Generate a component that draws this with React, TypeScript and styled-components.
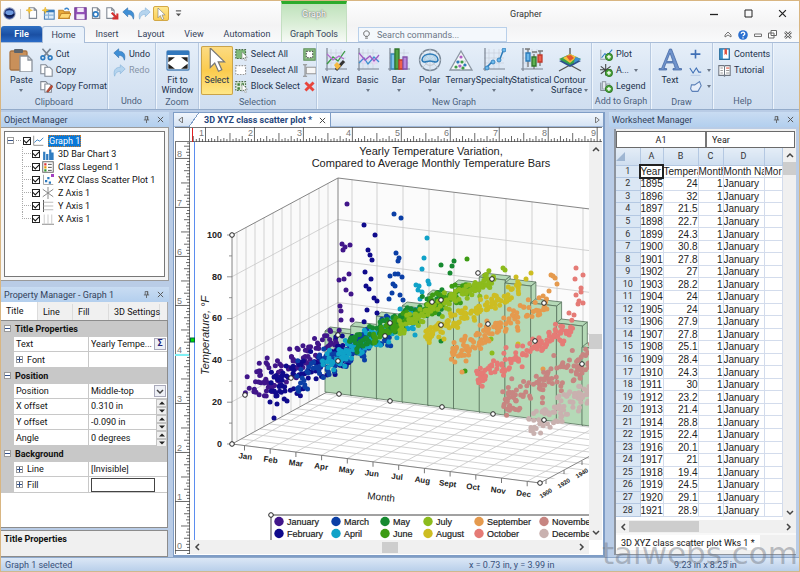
import React from "react";
import styled, { createGlobalStyle, css } from "styled-components";

const ui = `Roboto, "Noto Sans", sans-serif`;
const sheet = `"Liberation Sans", Arial, sans-serif`;

const Global = createGlobalStyle`
  * { box-sizing: border-box; }
  body { margin: 0; font-family: ${ui}; font-size: 9px; color: #1f2d42; background: #b9cce6; }
  button, input, select { font: inherit; color: inherit; margin: 0; padding: 0; border: 0; background: none; border-radius: 0; }
  svg { display: block; flex: none; }
`;

/* ---------- frame ---------- */
const Window = styled.div`
  height: 100vh;
  min-height: 560px;
  display: flex;
  flex-direction: column;
  border: 1px solid #d9b682;
  border-bottom: 0;
  overflow: hidden;
  position: relative;
`;
const Header = styled.header`
  display: flex;
  height: 42px;
  flex: none;
  background: linear-gradient(#fefefe, #f3f3f4 60%, #f9fafb);
  border-bottom: 1px solid #a9bdd8;
`;
const HeadLeft = styled.div`
  width: 280px;
  display: flex;
  flex-direction: column;
`;
const HeadRight = styled.div`
  flex: 1;
  display: flex;
  flex-direction: column;
`;
const QuickBar = styled.div`
  height: 26px;
  display: flex;
  align-items: center;
  gap: 2px;
  padding-left: 1px;
`;
const QuickButton = styled.button<{ $on?: boolean }>`
  width: ${(p) => (p.$on ? 16 : 14)}px;
  height: 15px;
  display: grid;
  place-items: center;
  border-radius: 2px;
  ${(p) => p.$on && css`background: linear-gradient(#ffe88f, #fbce55); border: 1px solid #d3a845;`}
`;
const QuickSep = styled.i`
  width: 1px;
  height: 10px;
  margin: 0 2px;
  background: #c9c9c9;
`;
const TabRow = styled.nav`
  height: 16px;
  display: flex;
  align-items: stretch;
`;
const RibbonTab = styled.button<{ $w: number; $kind?: "file" | "active" }>`
  width: ${(p) => p.$w}px;
  height: ${(p) => (p.$kind === "active" ? 17 : 16)}px;
  color: #34425a;
  border-radius: 3px 3px 0 0;
  ${(p) => p.$kind === "file" && css`background: linear-gradient(#2f6fc2, #1a4fa3 55%, #2a6cc8); color: #fff; font-weight: 600;`}
  ${(p) => p.$kind === "active" && css`background: #e9f1fa; border: 1px solid #a9bdd8; border-bottom: 0;`}
`;
const ContextTab = styled.div`
  width: 66px;
  border-top: 3px solid #2cab2c;
  background: linear-gradient(#bfe2bb, #dcefd9 55%, #f7faf7);
  border-left: 1px solid #c4dfc2;
  border-right: 1px solid #c4dfc2;
  display: flex;
  flex-direction: column;
  align-items: center;
  span { height: 22px; line-height: 20px; color: #fff; text-shadow: 0 0 2px #666, 0 0 1px #666; }
  button { height: 16px; color: #34425a; }
`;
const TitleRow = styled.div`
  height: 26px;
  display: flex;
  align-items: center;
  padding-left: 163px;
  h1 { flex: 1; margin: 0; font-size: 9px; font-weight: 400; color: #333; }
`;
const WindowButton = styled.button`
  width: 34px;
  height: 22px;
  display: grid;
  place-items: center;
`;
const SearchRow = styled.div`
  height: 16px;
  display: flex;
  align-items: center;
  padding: 1px 4px 0 11px;
`;
const SearchBox = styled.label`
  width: 149px;
  height: 15px;
  display: flex;
  align-items: center;
  gap: 6px;
  padding-left: 3px;
  border: 1px solid #b9d0ea;
  background: #f4f8fc;
  input { flex: 1; min-width: 0; outline: 0; }
  input::placeholder { color: #6b7686; opacity: 1; }
`;
const CaptionTools = styled.div`
  margin-left: auto;
  display: flex;
  align-items: center;
  button { width: 15px; display: grid; place-items: center; }
`;

/* ---------- ribbon ---------- */
const Ribbon = styled.div`
  height: 67px;
  flex: none;
  display: flex;
  background: linear-gradient(#e6eff9, #dae6f4 45%, #cfdef0);
  border-bottom: 1px solid #93abca;
`;
const Group = styled.section<{ $w: number }>`
  width: ${(p) => p.$w}px;
  display: flex;
  flex-direction: column;
  border-right: 1px solid #b7c9e0;
  box-shadow: 1px 0 0 #eef5fc;
  h2 { margin: 0; height: 15px; line-height: 14px; font-size: 9px; font-weight: 400; text-align: center; color: #4c5f7c; white-space: nowrap; }
`;
const GroupBody = styled.div`
  flex: 1;
  display: flex;
  padding: 3px 0 0 2px;
`;
const Stack = styled.div<{ $pad?: number }>`
  display: flex;
  flex-direction: column;
  padding-left: ${(p) => p.$pad ?? 0}px;
`;
const SmallButton = styled.button<{ $dim?: boolean }>`
  height: 16px;
  display: flex;
  align-items: center;
  gap: 3px;
  white-space: nowrap;
  color: ${(p) => (p.$dim ? "#8794a8" : "#22324c")};
`;
const BigButton = styled.button<{ $w: number; $on?: boolean }>`
  width: ${(p) => p.$w}px;
  height: 49px;
  display: flex;
  flex-direction: column;
  align-items: center;
  padding-top: 2px;
  line-height: 10px;
  white-space: nowrap;
  border-radius: 2px;
  color: #22324c;
  svg { margin-bottom: 3px; }
  ${(p) => p.$on && css`
    background: linear-gradient(#fcdc85, #fbcb4e 50%, #ffe88a);
    box-shadow: inset 0 0 0 1px #c9a34a;
  `}
`;
const Caret = styled.i`
  display: block;
  border: 2px solid transparent;
  border-top: 3px solid #6b7686;
  border-bottom: 0;
  margin-top: 4px;
`;
const InlineCaret = styled(Caret)`
  margin: 0 0 0 2px;
`;
const CaretLine = styled.span`
  display: flex;
  align-items: center;
`;

/* ---------- body ---------- */
const Body = styled.main`
  flex: 1;
  min-height: 0;
  display: flex;
  gap: 4px;
  padding-top: 2px;
`;
const LeftColumn = styled.div`
  width: 168px;
  display: flex;
  flex-direction: column;
  gap: 6px;
`;
const Panel = styled.section<{ $grow?: boolean }>`
  display: flex;
  flex-direction: column;
  ${(p) => p.$grow && css`flex: 1; min-height: 0;`}
`;
const PanelHead = styled.header`
  height: 15px;
  flex: none;
  display: flex;
  align-items: center;
  padding: 0 5px 0 3px;
  gap: 7px;
  background: linear-gradient(#c9dcf2, #b3cfee);
  color: #33415a;
  h3 { flex: 1; margin: 0; font-size: 9px; font-weight: 400; }
`;
const TreeFrame = styled.div`
  height: 154px;
  padding: 3px;
  background: #f6f6f6;
  border: 1px solid #9a9a9a;
  border-left: 0;
`;
const Tree = styled.ul`
  margin: 0;
  height: 100%;
  list-style: none;
  padding: 2px 0 51px 2px;
  background: #fff;
  border: 1px solid #777;
  display: grid;
  grid-template-rows: repeat(7, 1fr);
`;
const TreeRow = styled.li<{ $child?: boolean }>`
  display: flex;
  align-items: center;
  gap: 2px;
  color: #111;
  min-height: 0;
  padding-left: ${(p) => (p.$child ? 15 : 0)}px;
  label { white-space: nowrap; line-height: 12px; padding: 0 1px 0 2px; }
`;
const Dash = styled.i`
  width: 5px;
  border-top: 1px dotted #999;
`;
const ChildBranch = styled.i<{ $last?: boolean }>`
  width: 10px;
  align-self: stretch;
  margin-right: -2px;
  background:
    repeating-linear-gradient(#aaa 0 1px, transparent 1px 2px) 0 0 / 1px ${(p) => (p.$last ? "50%" : "100%")} no-repeat,
    repeating-linear-gradient(90deg, #aaa 0 1px, transparent 1px 2px) 0 50% / 100% 1px no-repeat;
`;
const Check = styled.input`
  appearance: none;
  width: 8px;
  height: 8px;
  flex: none;
  margin: 0;
  border: 1px solid #222;
  background: #fff;
  display: grid;
  place-items: center;
  &:checked::after {
    content: "";
    width: 5px;
    height: 3px;
    margin-top: -2px;
    border: solid #111;
    border-width: 0 0 1px 1px;
    transform: rotate(-45deg);
  }
`;
const Expander = styled.button`
  width: 7px;
  height: 7px;
  flex: none;
  display: grid;
  place-items: center;
  border: 1px solid #9a9a9a;
  background: #fff;
`;
const Selected = styled.b`
  font-weight: 400;
  display: inline-block;
  background: #0a78d7;
  color: #fff;
  outline: 1px dotted #c77a30;
  outline-offset: -1px;
  padding: 0 1px;
`;

const PropTabs = styled.div`
  height: 18px;
  flex: none;
  display: flex;
  align-items: flex-end;
  background: #f0f0f0;
  margin-right: 1px;
  border-right: 1px solid #aaa;
`;
const PropTab = styled.button<{ $w: number; $on?: boolean }>`
  width: ${(p) => p.$w}px;
  height: ${(p) => (p.$on ? 18 : 16)}px;
  text-align: left;
  padding-left: 5px;
  color: #111;
  background: ${(p) => (p.$on ? "#fff" : "#f0f0f0")};
  border-right: 1px solid #dcdcdc;
  white-space: nowrap;
`;
const PropBox = styled.div`
  flex: 1;
  min-height: 0;
  background: #fff;
  border: solid #8c8c8c;
  border-width: 1px 1px 1px 0;
  margin-right: 1px;
  color: #111;
`;
const PropGrid = styled.div`
  height: 172px;
  display: grid;
  grid-template-rows: repeat(11, 1fr);
`;
const PropGroup = styled.div`
  display: flex;
  align-items: center;
  gap: 4px;
  padding-left: 3px;
  background: #c8c8c8;
  font-weight: 700;
`;
const PropRow = styled.div`
  display: grid;
  grid-template-columns: 13px 75px 1fr;
  min-height: 0;
  &::before { content: ""; background: #c8c8c8; }
`;
const PropName = styled.label`
  display: flex;
  align-items: center;
  gap: 4px;
  padding-left: 2px;
  border: solid #c8c8c8;
  border-width: 0 1px 1px 0;
`;
const PropValue = styled.div`
  display: flex;
  align-items: center;
  padding-left: 2px;
  border-bottom: 1px solid #c8c8c8;
  min-width: 0;
  input, select { flex: 1; min-width: 0; width: 0; height: 100%; outline: 0; appearance: none; text-overflow: ellipsis; }
`;
const TinyButton = styled.button`
  width: 12px;
  height: 12px;
  display: grid;
  place-items: center;
  border: 1px solid #aab;
  background: #eef0f6;
  font-weight: 700;
  color: #22227a;
  line-height: 9px;
  margin-right: 1px;
`;
const Spinner = styled.div`
  width: 11px;
  height: 14px;
  display: grid;
  grid-template-rows: 1fr 1fr;
  button { background: #efefef; border: 1px solid #c4c4c4; display: grid; place-items: center; }
`;
const Swatch = styled.button`
  width: 64px;
  height: 14px;
  border: 1px solid #444;
  background: #fff;
`;
const HelpBox = styled.div`
  height: 27px;
  flex: none;
  margin: 2px 1px 0 0;
  padding: 3px;
  background: #f0f0f0;
  border: 1px solid #8c8c8c;
  border-left: 0;
  font-weight: 700;
  color: #111;
`;

/* ---------- document ---------- */
const Doc = styled.section`
  flex: 1;
  min-width: 0;
  display: flex;
  flex-direction: column;
  border: solid #7f9dc6;
  border-width: 1px 2px 2px 1px;
  background: #fff;
  padding: 0 1px 1px;
`;
const DocTabs = styled.div`
  height: 14px;
  flex: none;
  margin: 0 -1px;
  display: flex;
  align-items: stretch;
  background: linear-gradient(#f1f6fc, #d6e4f5);
  border-bottom: 1px solid #9db6d8;
`;
const ArrowButton = styled.button`
  width: 13px;
  display: grid;
  place-items: center;
`;
const DocTab = styled.div`
  height: 14px;
  display: flex;
  align-items: center;
  gap: 7px;
  padding: 0 4px 0 17px;
  background: linear-gradient(125deg, transparent 9px, #7f9dc6 9px 10px, #fff 10px);
  border-right: 1px solid #7f9dc6;
  color: #26467c;
  font-weight: 700;
  white-space: nowrap;
  margin-right: auto;
  button { display: grid; place-items: center; }
`;
const DocGrid = styled.div`
  flex: 1;
  min-height: 0;
  display: grid;
  grid-template-columns: 15px 1fr 13px;
  grid-template-rows: 15px 1fr 14px;
`;
const TopRuler = styled.div`
  grid-column: 1 / 4;
  overflow: hidden;
`;
const SideRuler = styled.div`
  grid-row: 2 / 4;
  overflow: hidden;
`;
const Canvas = styled.div`
  overflow: hidden;
  min-width: 0;
  min-height: 0;
`;
const VScroll = styled.div<{ $thumb: number; $top: number }>`
  display: flex;
  flex-direction: column;
  align-items: center;
  justify-content: space-between;
  padding: 4px 0;
  background:
    linear-gradient(#cdcdcd, #cdcdcd) 50% ${(p) => p.$top}% / 100% ${(p) => p.$thumb}px no-repeat,
    #f0f0f0;
`;
const HScroll = styled.div<{ $thumb: number; $left: number }>`
  min-height: 13px;
  flex: none;
  display: flex;
  align-items: center;
  justify-content: space-between;
  padding: 0 4px;
  background:
    linear-gradient(#cdcdcd, #cdcdcd) ${(p) => p.$left}% 50% / ${(p) => p.$thumb}px 11px no-repeat,
    #f0f0f0;
`;

/* ---------- worksheet ---------- */
const RightColumn = styled.div`
  width: 190px;
  display: flex;
  flex-direction: column;
`;
const SheetFrame = styled.div`
  flex: 1;
  min-height: 0;
  display: flex;
  flex-direction: column;
  background: #f0f0f0;
  border-left: 2px solid #8d949e;
  border-bottom: 1px solid #8d949e;
  margin: 2px 3px 2px 5px;
  padding: 2px 0 0;
`;
const FormulaBar = styled.div`
  display: flex;
  height: 17px;
  flex: none;
  border: 1px solid #6a6a6a;
  background: #fff;
  margin-right: 1px;
  color: #222;
  input { min-width: 0; outline: 0; }
  input:first-child { width: 90px; text-align: center; border-right: 2px solid #777; }
  input:last-child { flex: 1; padding-left: 5px; }
`;
const SheetArea = styled.div`
  flex: 1;
  min-height: 0;
  display: grid;
  grid-template-columns: 1fr 13px;
`;
const TableWrap = styled.div`
  display: grid;
  min-width: 0;
  overflow: hidden;
  background: #fff;
  padding-bottom: 3px;
`;
const Table = styled.table`
  border-collapse: collapse;
  table-layout: fixed;
  width: 100%;
  height: 100%;
  font-family: ${sheet};
  font-size: 10px;
  line-height: 11px;
  color: #222;
  th { padding: 0; font: 400 9px/11px ${ui}; color: #333; background: #dbe7f4; border: 1px solid #b4c8e2; border-top: 0; border-left: 0; }
  thead th { height: 17px; background: linear-gradient(#e4edf7, #cfdeef); }
  td { padding: 0; overflow: hidden; white-space: nowrap; border: 1px solid #d3dcec; border-left-width: 0; }
`;
const Num = styled.td`
  text-align: right;
`;
const Active = styled.td`
  outline: 2px solid #222;
  outline-offset: -1px;
`;
const SheetTab = styled.div`
  height: 21px;
  flex: none;
  border-top: 2px solid #f8f8f8;
  button { display: block; background: #fff; height: 15px; padding: 0 5px; color: #111; white-space: nowrap; }
`;

const Status = styled.footer`
  height: 15px;
  flex: none;
  display: flex;
  align-items: center;
  padding: 0 4px;
  background: linear-gradient(#dbe7f6, #b9cfea);
  border-top: 1px solid #8fa9cb;
  border-bottom: 1px solid #cdb98f;
  color: #38507a;
  span:first-child { width: 464px; }
  span:nth-child(2) { width: 205px; }
`;
const Watermark = styled.div`
  position: absolute;
  right: 1px;
  bottom: 3px;
  font: 400 31px/31px "DejaVu Sans", sans-serif;
  color: rgba(110, 116, 126, 0.45);
  pointer-events: none;
`;

/* ---------- icons ---------- */
type IconProps = { s?: number; vb?: number; children: React.ReactNode };
const Ico = ({ s = 13, vb = 16, children }: IconProps) => (
  <svg width={s} height={s} viewBox={`0 0 ${vb} ${vb}`} fill="none" strokeWidth="1.3" aria-hidden="true">{children}</svg>
);
const Page = ({ x = 3, y = 1 }: { x?: number; y?: number }) => (
  <path d={`M${x} ${y}h6l3 3v10h-9z M${x + 6} ${y}v3h3`} fill="#fff" stroke="#7f8792" />
);
const Star = () => <path d="M4 0l1 3 3 1-3 1-1 3-1-3-3-1 3-1z" fill="#f8c93a" stroke="#e6ac1c" strokeWidth=".6" />;
const CursorPath = ({ t = "" }: { t?: string }) => (
  <path transform={t} d="M1 0v13l3-3 2.5 5.5 2.2-1L6.300 9.200h4.200z" fill="#fff" stroke="#777" strokeWidth=".8" />
);
const UndoPath = ({ c = "#3f8fd6" }) => (
  <path d="M1 6l6-5v3c6 0 9 4 7 11-1-4-3-6-7-6v3z" fill={c} stroke="#2b6aa8" strokeWidth=".7" />
);
const RedoPath = () => (
  <path d="M15 6L9 1v3C3 4 0 8 2 15c1-4 3-6 7-6v3z" fill="#b5d4ee" stroke="#7fb0d8" strokeWidth=".7" />
);
const Plus = ({ x = 11, y = 11 }) => (
  <g><circle cx={x} cy={y} r="4.200" fill="#4fa83d" stroke="#2f7a26" /><path d={`M${x - 2.500} ${y}h5M${x} ${y - 2.500}v5`} stroke="#fff" strokeWidth="1.500" /></g>
);
const Axes = () => (
  <g stroke="#a8afb8" strokeWidth=".6"><path d="M2 5h20M2 10h20M2 15h20M7 1v20M12 1v20M17 1v20" stroke="#c8ced8" /><path d="M3 0v21h20M1 21h2M3 21v2" stroke="#7d8694" strokeWidth="1.200" /></g>
);
const DashedBox = ({ fill = "#fff", c = "#999" }) => (
  <rect x="1" y="2" width="12" height="11" fill={fill} stroke={c} strokeDasharray="2 1.500" />
);
const Chevron = ({ d }: { d: "up" | "down" | "left" | "right" }) => {
  const p = { up: "M1 5l3-3 3 3", down: "M1 3l3 3 3-3", left: "M5 1L2 4l3 3", right: "M3 1l3 3-3 3" }[d];
  return <Ico s={8} vb={8}><path d={p} stroke="#444" strokeWidth="1.500" /></Ico>;
};
const Cross = ({ s = 7, c = "#444" }) => <Ico s={s} vb={8}><path d="M1 1l6 6M7 1L1 7" stroke={c} strokeWidth="1.100" /></Ico>;
const Pin = () => <Ico s={7} vb={8}><path d="M2.500.500h3v4M2.500.500v4M1 4.500h6M4 4.500v3.500M5 .500v4" stroke="#555" strokeWidth=".9" /></Ico>;
const Tri = ({ d }: { d: "l" | "r" | "u" | "d" }) => (
  <Ico s={6} vb={8}><path d={{ l: "M6 0v8L1 4z", r: "M2 0v8l5-4z", u: "M0 6h8L4 2z", d: "M0 2h8L4 6z" }[d]} fill={d === "u" || d === "d" ? "#222" : "none"} stroke={d === "u" || d === "d" ? "none" : "#777"} /></Ico>
);

const big = {
  paste: <Ico s={24} vb={24}><rect x="1" y="3" width="17" height="19" rx="1.500" fill="#c9905a" stroke="#a87444" /><rect x="5" y="1" width="9" height="4" rx="1" fill="#5b646e" /><path d="M11 8h8l4 4v12H11z" fill="#fff" stroke="#8b929c" /><path d="M19 8v4h4" stroke="#8b929c" /></Ico>,
  fit: <Ico s={24} vb={24}><rect x="1" y="3" width="22" height="19" rx="1" fill="#fff" stroke="#4e82b8" /><path d="M1 3h22v4H1z" fill="#3278bd" /><path d="M3 13v-3h4zM21 13v-3h-4zM3 17v3h4zM21 17v3h-4z" fill="#222" stroke="#222" /></Ico>,
  select: <Ico s={24} vb={16}><CursorPath t="translate(2.500 0)" /></Ico>,
  wizard: <Ico s={24} vb={24}><Axes /><path d="M3 16l6-7 5 4 7-10" stroke="#3c9b44" /><path d="M3 6l6 6 6-4 5 3" stroke="#b46bd0" /><path d="M12 22l8-9" stroke="#333" strokeWidth="3" /><path d="M10 17l3-3 4 4-4 4z" fill="#f5b942" /></Ico>,
  basic: <Ico s={24} vb={24}><Axes /><path d="M3 5l5 7 5-3 5 4 5-5v5l-5 4-5-6-5 5-5-4z" fill="#e8d5f4" /><path d="M3 15l5-5 4 6 6-7 5 5" stroke="#3d8fd1" /><path d="M3 5l6 7 5-4 4 5 5-6" stroke="#a05cc4" /></Ico>,
  bar: <Ico s={24} vb={24}><Axes /><path d="M4 6h4v15H4z" fill="#7cc3ea" stroke="#3a86b7" /><path d="M8 1h4v20H8z" fill="#4fa345" stroke="#32752b" /><path d="M12 12h4v9h-4z" fill="#f0604c" stroke="#c0392b" /><path d="M16 9h4v12h-4z" fill="#b988dd" stroke="#8353ab" /></Ico>,
  polar: <Ico s={24} vb={24}><circle cx="12" cy="12" r="10.500" stroke="#7a8897" /><circle cx="12" cy="12" r="5.500" stroke="#c3cad2" /><path d="M12 1v22M1 12h22M4 4l16 16M20 4L4 20" stroke="#c3cad2" strokeWidth=".8" /><path d="M4 12c0-8 16-8 16 0-1 4-5 1-8 1s-7 3-8-1z" fill="#a9d3ee" fillOpacity=".5" stroke="#2b7ab8" strokeWidth="1.500" /></Ico>,
  ternary: <Ico s={24} vb={24}><path d="M12 3l11 19H1z" fill="#f4f6f8" stroke="#8b96a3" /><path d="M7 13h10M12 22l5-9M12 22l-5-9" stroke="#c3cad2" strokeWidth=".8" />{[[12, 9, "#b05cc4"], [9, 14, "#2b7ab8"], [13, 14, "#3c9b44"], [7, 19, "#3c9b44"], [11, 18, "#b05cc4"], [16, 17, "#2b7ab8"], [14, 20, "#3c9b44"]].map(([x, y, c]) => <circle key={`${x}-${y}`} cx={x} cy={y} r="1.600" fill={c as string} />)}</Ico>,
  specialty: <Ico s={24} vb={24}><Axes /><path d="M4 20l5-5 3-1M16 12l2-1 3-8" stroke="#2b7ab8" strokeWidth="1.500" />{[[5, 20], [11, 14], [17, 12], [22, 2]].map(([x, y]) => <circle key={x} cx={x} cy={y} r="2" fill="#6cb8ea" stroke="#2b7ab8" strokeWidth=".8" />)}</Ico>,
  statistical: <Ico s={24} vb={24}><Axes /><path d="M8 1v18M5 1h5M14 6v15M12 4h5M20 3v15M18 3h5" stroke="#777" /><path d="M6 5h4v8H6z" fill="#6cb8ea" stroke="#2b7ab8" /><path d="M12 9h4v9h-4z" fill="#5cb04f" stroke="#32752b" /><path d="M18 7h4v7h-4z" fill="#f0604c" stroke="#c0392b" /></Ico>,
  contour: <Ico s={24} vb={24}><path d="M12 0v17M12 17L1 23M12 17l11 6" stroke="#555" /><path d="M12 9l11 4-11 6-11-6z" fill="#2d4f8f" /><path d="M12 6l11 5-11 6L1 11z" fill="#3aa04c" /><path d="M12 6l7 3-7 6-7-5z" fill="#f5c13b" /><path d="M8 8l5-1 3 3-4 3z" fill="#e2582f" /><path d="M17 9l6 2-7 4z" fill="#3f8fd6" /></Ico>,
  text: <svg width="24" height="24" viewBox="0 0 24 24" aria-hidden="true"><path d="M11.500 1h2L21 20.500h2.500V22H15v-1.500h2.300L15.500 15H8l-2 5.500h2.600V22H1v-1.500h2.500zM8.600 13.500H15L12 5z" fill="#6f93cc" stroke="#3d629f" strokeWidth=".7" /></svg>,
};

const sm = {
  cut: <Ico><path d="M3 1l8 9M13 1L5 10" stroke="#7c8794" strokeWidth="2" /><circle cx="3.500" cy="12" r="2.300" stroke="#2f7cc1" strokeWidth="2" /><circle cx="12.500" cy="12" r="2.300" stroke="#2f7cc1" strokeWidth="2" /></Ico>,
  copy: <Ico><path d="M1 1h6l2 2v9H1z" fill="#fff" stroke="#7f8792" /><path d="M6 4h6l3 3v8H6z" fill="#fff" stroke="#7f8792" /></Ico>,
  format: <Ico><path d="M1 2h6l2 2v8H1z" fill="#fff" stroke="#7f8792" /><path d="M6 5h6l2 2v8H6z" fill="#fff" stroke="#7f8792" /><path d="M8 14l6-8 2 2-6 7z" fill="#c24a33" stroke="#7a2c1d" strokeWidth=".7" /></Ico>,
  undo: <Ico><UndoPath /></Ico>,
  redo: <Ico><RedoPath /></Ico>,
  selAll: <Ico><DashedBox fill="#7fb87a" c="#4d6b4a" /><CursorPath t="translate(8 5) scale(.7)" /></Ico>,
  deselect: <Ico><DashedBox /></Ico>,
  block: <Ico><DashedBox fill="#dcebd9" c="#4d6b4a" /><path d="M3 4h3v3H3zM8 4h3v3H8zM3 9h3v3H3z" fill="#3f7f3a" /><CursorPath t="translate(8 5) scale(.7)" /></Ico>,
  invert: <Ico><rect x="1" y="1" width="14" height="14" fill="#8cc085" stroke="#5d8f58" /><rect x="4" y="4" width="8" height="8" fill="#fff" stroke="#444" strokeDasharray="2 1.500" /></Ico>,
  rename: <Ico><rect x="4" y="4" width="12" height="8" fill="#f6f6f6" stroke="#999" /><path d="M0 1h5M0 15h5M2.500 1v14" stroke="#888" /></Ico>,
  del: <Ico><path d="M3 3l10 10M13 3L3 13" stroke="#e8453c" strokeWidth="3.500" /></Ico>,
  plot: <Ico><path d="M1 2v12h14" stroke="#a8afb8" /><path d="M2 12l4-5 3 2 6-7" stroke="#2f7cc1" /><Plus /></Ico>,
  axis: <Ico><path d="M7 0v14M1 3l12 9M13 3L1 12M0 7h14" stroke="#444" /><Plus /></Ico>,
  legend: <Ico><path d="M1 3v10h12" stroke="#7f8792" /><path d="M3 2h4v9H3zM8 5h4v8H8z" fill="#e4e8ee" stroke="#9aa3ae" /><Plus /></Ico>,
  plus: <Ico><path d="M8 2v11M2 7.500h12" stroke="#3f6fb5" strokeWidth="2" /></Ico>,
  zig: <Ico><path d="M1 5l4 6 4-6 3 5 3 0" stroke="#3f6fb5" /><path d="M2 14h12" stroke="#b9cbe6" /></Ico>,
  poly: <Ico><path d="M3 6l4 0 6-4 2 5-4 7H4l-2-3z" stroke="#5c80b8" fill="#e7eefa" /></Ico>,
  contents: <Ico><path d="M2 1h12v13H2z" fill="#3f96cf" stroke="#2a6f9f" /><path d="M6 2h7v11H6z" fill="#fff" /><path d="M8 1h3v8l-1.500-2L8 9z" fill="#e0513d" /></Ico>,
  tutorial: <Ico><path d="M1 2h6l1 1 1-1h6v12H9l-1 1-1-1H1z" fill="#fff" stroke="#6f7681" /><path d="M8 3v11" stroke="#6f7681" /><path d="M3 5h3M3 8h3M3 11h3M10 8h4M10 11h4" stroke="#999" /><path d="M10 5h4" stroke="#e0513d" /></Ico>,
};

/* ---------- chart ---------- */
const palette = ["#41168a", "#0f0a8c", "#0b3fa6", "#10a2c8", "#168a30", "#3d9c14", "#8cbb1c", "#cdbd22", "#e59a4e", "#e57b76", "#c78581", "#c9b1af"];
const months = ["Jan", "Feb", "Mar", "Apr", "May", "Jun", "Jul", "Aug", "Sept", "Oct", "Nov", "Dec"];
const temps = [27, 28, 36, 44, 54, 61, 67, 64, 57, 47, 36, 27];
const extremes: number[][][] = [
  [[347, 204], [342, 244], [345, 247], [350, 245], [343, 250], [349, 274], [339, 280], [344, 279], [346, 290], [351, 294], [340, 306], [341, 311], [352, 320]],
  [[364, 225], [375, 235], [368, 250], [370, 255], [372, 260], [365, 272], [371, 279], [366, 286], [369, 289], [374, 298], [377, 301], [367, 310], [377, 313], [274, 418], [277, 404], [270, 402], [287, 401]],
  [[394, 214], [401, 218], [396, 253], [399, 258], [398, 261], [390, 276], [395, 274], [398, 274], [402, 277], [393, 284], [395, 286], [392, 293], [389, 299], [400, 295], [403, 300]],
  [[427, 238], [424, 258], [422, 269], [416, 285], [419, 286], [428, 281], [429, 284], [418, 290], [420, 299], [422, 292], [400, 309], [415, 335]],
  [[441, 265], [454, 261], [452, 266], [450, 273], [439, 314], [441, 341]],
  [[467, 259], [465, 371]],
  [[503, 268], [505, 270], [491, 339], [492, 353]],
  [[531, 273], [526, 279], [516, 277], [518, 344]],
  [[551, 275], [553, 276], [555, 278], [557, 284], [549, 291], [466, 361], [543, 369], [462, 372]],
  [[576, 268], [583, 275], [575, 279], [581, 288], [581, 292], [576, 295], [579, 301], [583, 303], [578, 304], [569, 313], [574, 315]],
  [],
  [],
];
const random = (seed: number) => () => {
  seed = (seed * 1664525 + 1013904223) % 4294967296;
  return seed / 4294967296;
};
const cloud = (m: number) => {
  const r = random(m * 977 + 31);
  const spread = m < 3 || m > 9 ? 17 : m > 4 && m < 8 ? 9 : 11;
  return Array.from({ length: 115 }, () => {
    const t = r() * 0.9;
    const n = (r() + r() + r() - 1.5) * spread;
    const front = 445 + 3.2 * m - 2.05 * temps[m];
    const back = 387 + 3.2 * m - 2 * temps[m];
    return [245 + 25.7 * m + 107 * t, front + (back - front) * t + n];
  });
};
const wallX = [352, 377, 403, 429, 454, 480, 506, 532, 557, 583];
const barTops = [331, 326, 316, 306, 294, 284, 277, 283, 303, 323, 347];
const sideX = [237, 246, 255, 264, 273, 282, 291, 300, 309, 319, 328];
const handles = [[232, 235], [232, 444], [245, 395], [291, 378], [338, 361], [338, 335], [385, 336], [390, 323], [432, 302], [441, 300], [441, 325], [478, 273], [492, 279], [488, 324], [535, 341], [544, 303], [582, 364], [339, 394], [390, 401], [442, 407], [493, 414], [544, 420], [540, 483], [271, 515]];
const legend: [number, string, string][] = [[279, "January", "February"], [336, "March", "April"], [385, "May", "June"], [428, "July", "August"], [479, "September", "October"], [544, "November", "December"]];

const Chart = () => (
  <svg width="400" height="399" viewBox="190 142 400 399" fontFamily={sheet} role="img" aria-label="Yearly temperature scatter plot">
    <rect x="190" y="142" width="400" height="399" fill="#fff" />
    <path d="M194.500 142v399" stroke="#5b8def" />
    <g fontSize="11" fill="#222" textAnchor="middle">
      <text x="431" y="155">Yearly Temperature Variation,</text>
      <text x="431" y="167">Compared to Average Monthly Temperature Bars</text>
    </g>
    <path d="M232 235L338 178V386L232 444z" fill="#fafafa" />
    <path d="M338 178L590 209V418L338 386z" fill="#fbfbfb" />
    <g stroke="#c8c8c8" strokeWidth=".8">
      {sideX.map((x) => <path key={x} d={`M${x} ${235 - (x - 232) * 0.538}V${444 - (x - 232) * 0.547}`} />)}
      {wallX.map((x) => <path key={x} d={`M${x} ${178 + (x - 338) * 0.123}V${386 + (x - 338) * 0.127}`} />)}
      {[1, 2, 3, 4].map((i) => <path key={i} d={`M232 ${235 + i * 41.7}L338 ${178 + i * 41.500}L590 ${209 + i * 41.700}`} fill="none" />)}
    </g>
    <g stroke="#c6c6c6" strokeWidth=".8">
      {Array.from({ length: 11 }, (_, i) => i / 11.500).map((t) => <path key={t} d={`M${232 + 106 * t} ${444 - 58 * t}l400 50.700`} clipPath="url(#floor)" />)}
      {months.map((m, i) => <path key={m} d={`M${244.500 + 25.700 * i} ${445.500 + 3.250 * i}l107 -58`} />)}
    </g>
    <clipPath id="floor"><path d="M232 444L338 386L700 432L540 483z" /></clipPath>
    <g stroke="#777" fill="none">
      <path d="M232 235L338 178L590 209M338 178V386M232 235V444L338 386M232 444L540 483L590 456" strokeWidth=".9" />
      {[0, 1, 2, 3, 4, 5, 6, 7, 8, 9, 10].map((i) => <path key={i} d={`M232 ${235 + i * 20.900}h${i % 2 ? -3 : -5}`} strokeWidth=".8" />)}
      {months.map((m, i) => <path key={m} d={`M${244.500 + 25.700 * i} ${445.500 + 3.250 * i}v5`} />)}
      <path d="M546 480v4M564 470v4M582 461v4" />
    </g>
    <g fill="#b5d9b7" stroke="#55705a" strokeWidth=".8">
      {barTops.map((y, i) => {
        const x = 325 + 25.700 * i;
        const base = 392 + 3.300 * i;
        return (
          <g key={x}>
            <path d={`M${x + 26} ${y + 3}l5 -4V${base}l-5 4z`} />
            <path d={`M${x} ${y}l5 -4l26 3l-5 4z`} />
            <path d={`M${x} ${y}l26 3V${base + 3.300}L${x} ${base}z`} />
          </g>
        );
      })}
    </g>
    {palette.map((c, m) => (
      <g key={c} fill={c}>
        {[...cloud(m), ...extremes[m]].map(([x, y], i) => <circle key={i} cx={x} cy={y} r="2.500" />)}
      </g>
    ))}
    <g fontSize="9" fontWeight="700" fill="#222">
      {[100, 80, 60, 40, 20, 0].map((v, i) => <text key={v} x="222" y={238 + i * 41.700} textAnchor="end">{v}</text>)}
    </g>
    <text transform="translate(209 375) rotate(-90)" fontSize="11" fill="#222" fontStyle="italic">Temperature, °F</text>
    <text transform="translate(367 499) rotate(6)" fontSize="10" fill="#222">Month</text>
    <g fontSize="8" fontWeight="700" fill="#222" textAnchor="middle">
      {months.map((m, i) => <text key={m} transform={`translate(${245 + 25.300 * i} ${459 + 3.400 * i}) rotate(7)`}>{m}</text>)}
    </g>
    <g fontSize="6" fontWeight="700" fill="#222" textAnchor="middle">
      {["1900", "1920", "1940"].map((y, i) => <text key={y} transform={`translate(${547 + 18 * i} ${495 - 10 * i}) rotate(-32)`}>{y}</text>)}
    </g>
    <path d="M271 541V515H590" fill="none" stroke="#444" />
    <g fontSize="9" fill="#222" stroke="#222" strokeWidth=".2">
      {legend.map(([x, a, b], i) => (
        <g key={a}>
          <circle cx={x} cy="521.500" r="4.700" fill={palette[2 * i]} stroke="none" />
          <circle cx={x} cy="533.500" r="4.700" fill={palette[2 * i + 1]} stroke="none" />
          <text x={x + 8} y="525">{a}</text>
          <text x={x + 8} y="537">{b}</text>
        </g>
      ))}
    </g>
    <g fill="#fff" stroke="#222">
      {handles.map(([x, y]) => <circle key={`${x}-${y}`} cx={x} cy={y} r="2.300" />)}
    </g>
    <rect x="190.500" y="338" width="4" height="4" fill="#0d0" stroke="#064" />
  </svg>
);

const tickLen = (i: number) => (i % 16 === 0 ? 15 : i % 8 === 0 ? 9 : i % 4 === 0 ? 6 : i % 2 === 0 ? 4 : 3);
const HRuler = () => (
  <svg width="428" height="15" viewBox="175 127 428 15" fontFamily={sheet} fontSize="9" fill="#777">
    <path d="M175 127.500h428M175 141.500h428M189.500 127v15" stroke="#777" />
    {Array.from({ length: 134 }, (_, k) => k - 4).map((i) => <path key={i} d={`M${205.500 + i * 3.060} 142v-${tickLen((i + 64) % 16)}`} stroke="#444" strokeWidth=".8" />)}
    {Array.from({ length: 9 }, (_, i) => <text key={i} x={199 + i * 49} y="136">{i + 1}</text>)}
    <path d="M192.500 128v14" stroke="#e02020" />
  </svg>
);
const VRuler = () => (
  <svg width="15" height="413" viewBox="175 142 15 413" fontFamily={sheet} fontSize="9" fill="#777">
    <path d="M175.500 142v413M189.500 142v413" stroke="#777" />
    {Array.from({ length: 136 }, (_, k) => k - 1).map((i) => <path key={i} d={`M190 ${550.500 - i * 3.063}h-${tickLen((i + 16) % 16)}`} stroke="#444" strokeWidth=".8" />)}
    {Array.from({ length: 9 }, (_, i) => <text key={i} x="177" y={549 - i * 49}>{i}</text>)}
    <path d="M175 355h14" stroke="#7ff0f5" strokeWidth="2" />
  </svg>
);

/* ---------- data ---------- */
const readings: [number, number][] = [24, 32, 21.5, 22.7, 24.3, 30.8, 27.8, 27, 28.2, 24, 24, 27.9, 27.8, 25.1, 28.4, 24.3, 30, 23.2, 21.4, 28.8, 22.4, 20.1, 21, 19.4, 24.5, 29.1, 28.9].map((v, i) => [1895 + i, v]);

const treeIcons = [
  <Ico s={12} key="a"><path d="M3 5v11M7 8v8M11 2v14M14 6v10" stroke="#2f7cc1" strokeWidth="3" /></Ico>,
  <Ico s={12} key="b"><rect x="1" y="1" width="14" height="14" fill="#fff" stroke="#666" /><path d="M3 3h3v3H3z" fill="#d33" /><path d="M3 7h3v3H3z" fill="#e90" /><path d="M3 11h3v3H3z" fill="#393" /><path d="M8 4.500h5M8 8.500h5M8 12.500h5" stroke="#555" /></Ico>,
  <Ico s={12} key="c"><path d="M2 1v13h13" stroke="#aaa" /><path d="M4 8h3v3H4zM9 10h3v3H9zM7 4h3v3H7z" fill="#2f7cc1" /><path d="M12 0h4v4h-4z" fill="#a33fc0" /></Ico>,
  <Ico s={12} key="d"><path d="M8 0v16M1 3l14 10M15 3L1 13" stroke="#888" /></Ico>,
  <Ico s={12} key="e"><path d="M2 0v16" stroke="#555" /><path d="M2 3h13M2 8h13M2 13h13" stroke="#bbb" /></Ico>,
  <Ico s={12} key="f"><path d="M0 15h16" stroke="#888" /><path d="M3 2v13M8 2v13M13 2v13" stroke="#ccc" /></Ico>,
];
const treeItems = ["3D Bar Chart 3", "Class Legend 1", "XYZ Class Scatter Plot 1", "Z Axis 1", "Y Axis 1", "X Axis 1"];

const Box = ({ plus }: { plus?: boolean }) => (
  <Expander aria-label={plus ? "Expand" : "Collapse"}>
    <svg width="5" height="5" viewBox="0 0 5 5"><path d={plus ? "M0 2.500h5M2.500 0v5" : "M0 2.500h5"} stroke="#33518a" /></svg>
  </Expander>
);

const newGraph: [keyof typeof big, string, number][] = [["wizard", "Wizard", 33], ["basic", "Basic", 31], ["bar", "Bar", 31], ["polar", "Polar", 31], ["ternary", "Ternary", 31], ["specialty", "Specialty", 36], ["statistical", "Statistical", 39], ["contour", "Contour", 37]];

export default function App() {
  return (
    <>
      <Global />
      <Window>
        <Header>
          <HeadLeft>
            <QuickBar>
              <QuickButton aria-label="Application"><Ico><circle cx="8" cy="8" r="7" fill="#1b2f78" stroke="#9aa7c4" /><ellipse cx="8" cy="7" rx="5" ry="3" fill="#6f9be0" /><path d="M2 9c4 3 8 3 12 0" stroke="#0c1a4c" strokeWidth="2" /></Ico></QuickButton>
              <QuickSep />
              <QuickButton aria-label="New plot"><Ico><Page x={4} /><Star /></Ico></QuickButton>
              <QuickButton aria-label="New worksheet"><Ico><rect x="3" y="4" width="12" height="11" fill="#dcecfa" stroke="#4a7fb5" /><path d="M3 5h12" stroke="#3278bd" strokeWidth="3" /><path d="M3 10h12M8 6v9" stroke="#8bb3da" /><Star /></Ico></QuickButton>
              <QuickButton aria-label="Open"><Ico><path d="M1 4h5l2 2h6v8H1z" fill="#e9ab3a" stroke="#c5862a" /><path d="M4 8h12l-3 6H1z" fill="#ffd873" stroke="#c5862a" /><path d="M8 3c3-3 5-1 5 1" stroke="#3b87cd" strokeWidth="1.800" /></Ico></QuickButton>
              <QuickButton aria-label="Save"><Ico><path d="M1 1h14v14H1z" fill="#9350b8" stroke="#6b3590" /><path d="M4 1h8v5H4zM3 9h10v6H3z" fill="#f3eaf8" /></Ico></QuickButton>
              <QuickButton aria-label="Import"><Ico><Page /><circle cx="7" cy="9" r="3" stroke="#2f7cc1" strokeWidth="2" /></Ico></QuickButton>
              <QuickButton aria-label="Export"><Ico><Page x={1} /><path d="M7 7l6 6M14 8v6H8" stroke="#d32f2f" strokeWidth="2.500" /></Ico></QuickButton>
              <QuickButton aria-label="Undo">{sm.undo}</QuickButton>
              <QuickButton aria-label="Redo">{sm.redo}</QuickButton>
              <QuickButton $on aria-label="Select"><Ico s={12}><CursorPath t="translate(3 0)" /></Ico></QuickButton>
              <QuickButton aria-label="Customize"><Ico s={7} vb={8}><path d="M1 1h6" stroke="#555" /><path d="M1 4h6L4 7z" fill="#555" /></Ico></QuickButton>
            </QuickBar>
            <TabRow>
              <RibbonTab $w={41} $kind="file">File</RibbonTab>
              <RibbonTab $w={43} $kind="active">Home</RibbonTab>
              <RibbonTab $w={44}>Insert</RibbonTab>
              <RibbonTab $w={44}>Layout</RibbonTab>
              <RibbonTab $w={42}>View</RibbonTab>
              <RibbonTab $w={64}>Automation</RibbonTab>
            </TabRow>
          </HeadLeft>
          <ContextTab><span>Graph</span><button>Graph Tools</button></ContextTab>
          <HeadRight>
            <TitleRow>
              <h1>Grapher</h1>
              <WindowButton aria-label="Minimize"><Ico s={8} vb={8}><path d="M0 4.500h8" stroke="#222" /></Ico></WindowButton>
              <WindowButton aria-label="Maximize"><Ico s={9} vb={9}><path d="M1 1h7v7H1z" stroke="#222" strokeWidth="1" /></Ico></WindowButton>
              <WindowButton aria-label="Close"><Cross s={9} c="#222" /></WindowButton>
            </TitleRow>
            <SearchRow>
              <SearchBox>
                <Ico s={9} vb={10}><path d="M3.500 7C.500 4.500 2 1 5 1s4.500 3.500 1.500 6zM3.500 9h3" stroke="#555" strokeWidth="1" /></Ico>
                <input aria-label="Search commands" placeholder="Search commands..." />
              </SearchBox>
              <CaptionTools>
                <button aria-label="Collapse ribbon"><Ico s={8} vb={8}><path d="M1 6V4l3-3 3 3v2L4 4z" stroke="#666" strokeWidth=".9" /></Ico></button>
                <button aria-label="Help"><Ico s={10} vb={10}><circle cx="5" cy="5" r="4.800" fill="#2a6fd0" /><path d="M3.300 3.800C3.300 1.500 7 1.800 6.700 4 6.500 5 5 5 5 6.300M5 7.300v1.200" stroke="#fff" /></Ico></button>
                <button aria-label="Minimize document"><Ico s={8} vb={8}><path d="M.500 3h7v2.500h-7z" stroke="#666" strokeWidth=".9" /></Ico></button>
                <button aria-label="Restore document"><Ico s={9} vb={9}><path d="M3 .500h5.500v5H3zM.500 3h5.500v5H.500z" fill="#fff" stroke="#666" strokeWidth="1" /></Ico></button>
                <button aria-label="Close document"><Ico s={8} vb={8}><path d="M1 1l6 6M7 1L1 7" stroke="#666" strokeWidth="2.500" /><path d="M1 1l6 6M7 1L1 7" stroke="#fff" strokeWidth=".8" /></Ico></button>
              </CaptionTools>
            </SearchRow>
          </HeadRight>
        </Header>

        <Ribbon>
          <Group $w={107}>
            <GroupBody>
              <BigButton $w={37}>{big.paste}Paste<Caret /></BigButton>
              <Stack>
                <SmallButton>{sm.cut}Cut</SmallButton>
                <SmallButton>{sm.copy}Copy</SmallButton>
                <SmallButton>{sm.format}Copy Format</SmallButton>
              </Stack>
            </GroupBody>
            <h2>Clipboard</h2>
          </Group>
          <Group $w={48}>
            <GroupBody>
              <Stack $pad={3}>
                <SmallButton>{sm.undo}Undo</SmallButton>
                <SmallButton $dim>{sm.redo}Redo</SmallButton>
              </Stack>
            </GroupBody>
            <h2>Undo</h2>
          </Group>
          <Group $w={43}>
            <GroupBody><BigButton $w={39}>{big.fit}Fit to<br />Window</BigButton></GroupBody>
            <h2>Zoom</h2>
          </Group>
          <Group $w={118}>
            <GroupBody>
              <BigButton $w={32} $on>{big.select}Select</BigButton>
              <Stack $pad={2}>
                <SmallButton>{sm.selAll}Select All</SmallButton>
                <SmallButton>{sm.deselect}Deselect All</SmallButton>
                <SmallButton>{sm.block}Block Select</SmallButton>
              </Stack>
              <Stack $pad={3}>
                <SmallButton aria-label="Invert selection">{sm.invert}</SmallButton>
                <SmallButton aria-label="Rename">{sm.rename}</SmallButton>
                <SmallButton aria-label="Delete">{sm.del}</SmallButton>
              </Stack>
            </GroupBody>
            <h2>Selection</h2>
          </Group>
          <Group $w={275}>
            <GroupBody>
              {newGraph.map(([k, label, w]) => (
                <BigButton key={k} $w={w}>
                  {big[k]}
                  {label}
                  {k === "contour" ? <CaretLine>Surface<InlineCaret /></CaretLine> : k !== "wizard" && <Caret />}
                </BigButton>
              ))}
            </GroupBody>
            <h2>New Graph</h2>
          </Group>
          <Group $w={59}>
            <GroupBody>
              <Stack $pad={6}>
                <SmallButton>{sm.plot}Plot</SmallButton>
                <SmallButton>{sm.axis}A...<InlineCaret /></SmallButton>
                <SmallButton>{sm.legend}Legend</SmallButton>
              </Stack>
            </GroupBody>
            <h2>Add to Graph</h2>
          </Group>
          <Group $w={62}>
            <GroupBody>
              <BigButton $w={34}>{big.text}Text</BigButton>
              <Stack $pad={2}>
                <SmallButton aria-label="Symbol">{sm.plus}</SmallButton>
                <SmallButton aria-label="Polyline">{sm.zig}<InlineCaret /></SmallButton>
                <SmallButton aria-label="Polygon">{sm.poly}<InlineCaret /></SmallButton>
              </Stack>
            </GroupBody>
            <h2>Draw</h2>
          </Group>
          <Group $w={60}>
            <GroupBody>
              <Stack $pad={3}>
                <SmallButton>{sm.contents}Contents</SmallButton>
                <SmallButton>{sm.tutorial}Tutorial</SmallButton>
              </Stack>
            </GroupBody>
            <h2>Help</h2>
          </Group>
        </Ribbon>

        <Body>
          <LeftColumn>
            <Panel>
              <PanelHead><h3>Object Manager</h3><Pin /><Cross c="#555" /></PanelHead>
              <TreeFrame>
                <Tree>
                  <TreeRow>
                    <Box /><Dash />
                    <Check type="checkbox" defaultChecked id="graph" />
                    <Ico s={11}><path d="M1 1v14h14" stroke="#888" /><path d="M2 11l4-4 4 2 5-5" stroke="#2f7cc1" /></Ico>
                    <label htmlFor="graph"><Selected>Graph 1</Selected></label>
                  </TreeRow>
                  {treeItems.map((t, i) => (
                    <TreeRow key={t} $child>
                      <ChildBranch $last={i === 5} />
                      <Check type="checkbox" defaultChecked id={`obj${i}`} />
                      {treeIcons[i]}
                      <label htmlFor={`obj${i}`}>{t}</label>
                    </TreeRow>
                  ))}
                </Tree>
              </TreeFrame>
            </Panel>
            <Panel $grow>
              <PanelHead><h3>Property Manager - Graph 1</h3><Pin /><Cross c="#555" /></PanelHead>
              <PropTabs>
                <PropTab $w={37} $on>Title</PropTab>
                <PropTab $w={35}>Line</PropTab>
                <PropTab $w={36}>Fill</PropTab>
                <PropTab $w={51}>3D Settings</PropTab>
              </PropTabs>
              <PropBox>
                <PropGrid>
                  <PropGroup><Box />Title Properties</PropGroup>
                  <PropRow><PropName htmlFor="ptext">Text</PropName><PropValue><input id="ptext" defaultValue="Yearly Tempe..." /><TinyButton>Σ</TinyButton></PropValue></PropRow>
                  <PropRow><PropName as="div"><Box plus />Font</PropName><PropValue /></PropRow>
                  <PropGroup><Box />Position</PropGroup>
                  <PropRow><PropName htmlFor="ppos">Position</PropName><PropValue><select id="ppos"><option>Middle-top</option></select><TinyButton as="span"><Chevron d="down" /></TinyButton></PropValue></PropRow>
                  {[["X offset", "0.310 in"], ["Y offset", "-0.090 in"], ["Angle", "0 degrees"]].map(([n, v]) => (
                    <PropRow key={n}>
                      <PropName htmlFor={n}>{n}</PropName>
                      <PropValue>
                        <input id={n} defaultValue={v} />
                        <Spinner><button aria-label="Increase"><Tri d="u" /></button><button aria-label="Decrease"><Tri d="d" /></button></Spinner>
                      </PropValue>
                    </PropRow>
                  ))}
                  <PropGroup><Box />Background</PropGroup>
                  <PropRow><PropName as="div"><Box plus />Line</PropName><PropValue>[Invisible]</PropValue></PropRow>
                  <PropRow><PropName as="div"><Box plus />Fill</PropName><PropValue><Swatch aria-label="Fill colour" /></PropValue></PropRow>
                </PropGrid>
              </PropBox>
              <HelpBox>Title Properties</HelpBox>
            </Panel>
          </LeftColumn>

          <Doc>
            <DocTabs>
              <ArrowButton aria-label="Previous tab"><Tri d="l" /></ArrowButton>
              <DocTab>3D XYZ class scatter plot *<button aria-label="Close tab"><Cross /></button></DocTab>
              <ArrowButton aria-label="Next tab"><Tri d="r" /></ArrowButton>
            </DocTabs>
            <DocGrid>
              <TopRuler><HRuler /></TopRuler>
              <SideRuler><VRuler /></SideRuler>
              <Canvas><Chart /></Canvas>
              <VScroll $thumb={15} $top={50}><Chevron d="up" /><Chevron d="down" /></VScroll>
              <HScroll $thumb={16} $left={50}><Chevron d="left" /><Chevron d="right" /></HScroll>
            </DocGrid>
          </Doc>

          <RightColumn>
            <PanelHead><h3>Worksheet Manager</h3><Pin /><Cross c="#555" /></PanelHead>
            <SheetFrame>
              <FormulaBar><input aria-label="Cell" defaultValue="A1" /><input aria-label="Value" defaultValue="Year" /></FormulaBar>
              <SheetArea>
                <TableWrap>
                  <Table>
                    <colgroup><col width="24" /><col width="23" /><col width="35" /><col width="25" /><col width="41" /><col /></colgroup>
                    <thead><tr><th><Ico s={9} vb={9}><path d="M9 0v9H0z" fill="#9fb6d2" /></Ico></th><th>A</th><th>B</th><th>C</th><th>D</th><th /></tr></thead>
                    <tbody>
                      <tr><th>1</th><Active>Year</Active><td>Temperature</td><td>Month</td><td>Month Name</td><td>Month</td></tr>
                      {readings.map(([y, v], i) => (
                        <tr key={y}><th>{i + 2}</th><td>{y}</td><Num>{v}</Num><Num>1</Num><td>January</td><td /></tr>
                      ))}
                    </tbody>
                  </Table>
                </TableWrap>
                <VScroll $thumb={13} $top={4}><Chevron d="up" /><Chevron d="down" /></VScroll>
              </SheetArea>
              <HScroll $thumb={70} $left={12}><Chevron d="left" /><Chevron d="right" /></HScroll>
              <SheetTab><button>3D XYZ class scatter plot Wks 1 *</button></SheetTab>
            </SheetFrame>
          </RightColumn>
        </Body>

        <Status><span>Graph 1 selected</span><span>x = 0.73 in, y = 3.99 in</span><span>9.23 in x 8.25 in</span></Status>
        <Watermark>taiwebs.com</Watermark>
      </Window>
    </>
  );
}
